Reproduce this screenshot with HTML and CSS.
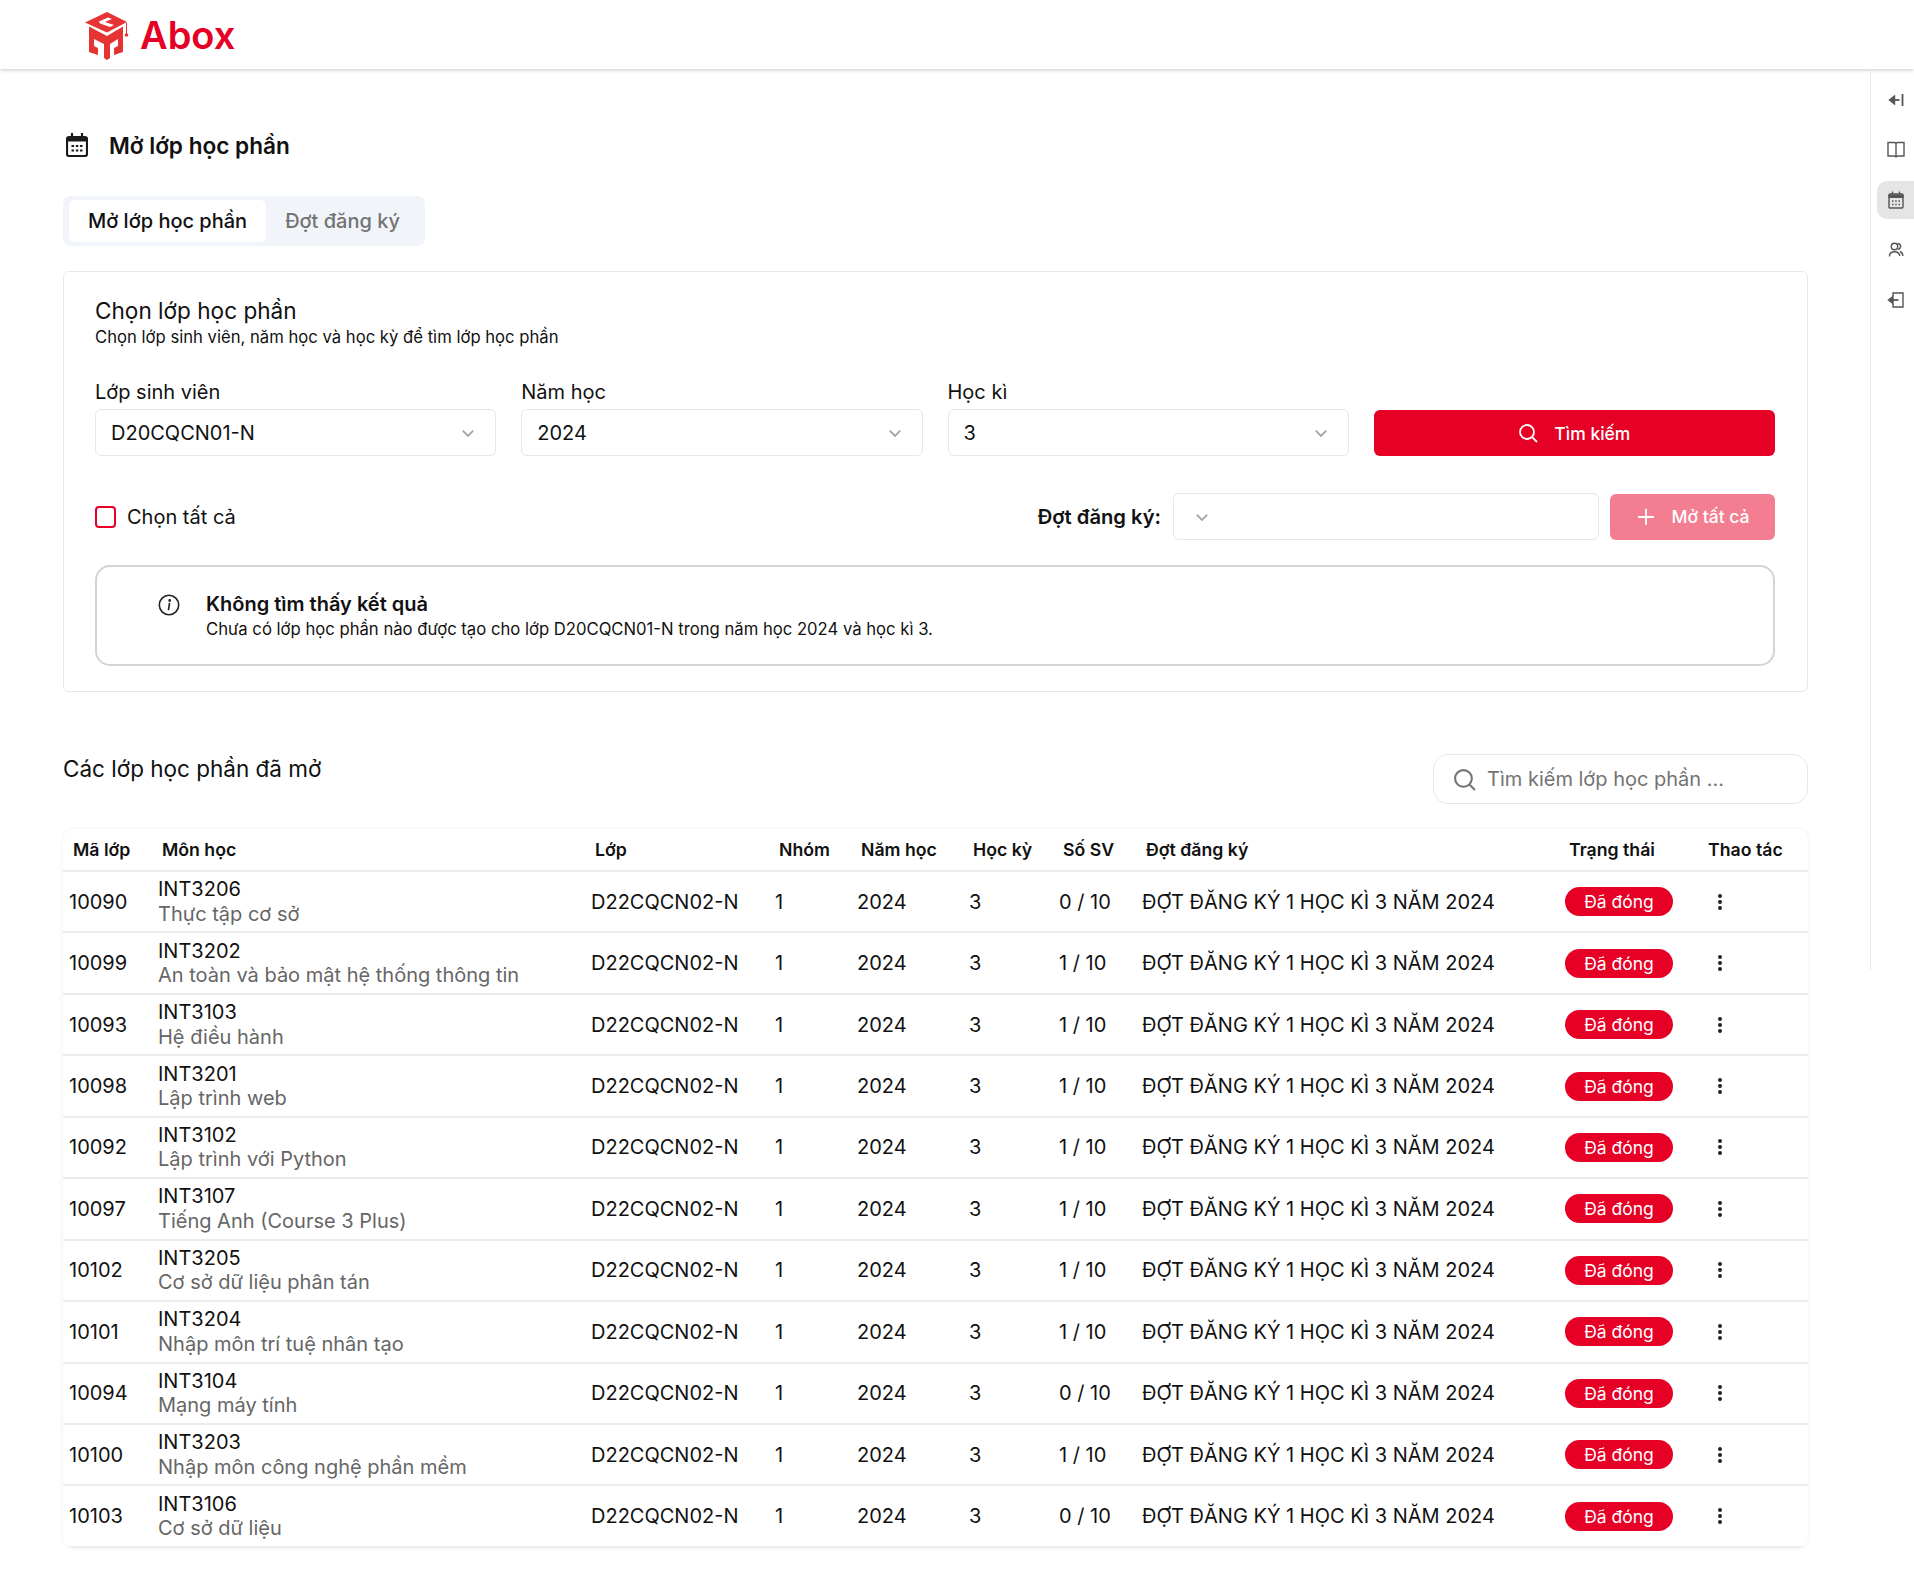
FILE: index.html
```html
<!DOCTYPE html>
<html lang="vi">

<head>
    <meta charset="UTF-8">
    <meta name="viewport" content="width=device-width, initial-scale=1.0">
    <title>Mở lớp học phần</title>
    <link rel="stylesheet" href="styles.css">
</head>

<body>
    <!--en-tete-->
    <header class="topbar">
        <svg class="logo" viewBox="0 0 54 54" fill="#e63333">
            <path d="M5 14.500 27 4 47 14 27 24.500Z" />
            <path d="M19 13.500 28 9.500 32 11 25 14 34 17 30 19 20 15.500Z" fill="#fff" />
            <path d="M46 15h1v11h-1z" />
            <circle cx="46.500" cy="27" r="1.800" />
            <path d="M9 18.500 27 28 43 18.500V44L34 47V40L38 38V31L30 36V50L27 52 24 50V36L14 31V38L18 40V47L9 44Z" />
        </svg>
        <span class="brand">Abox</span>
    </header>

    <div class="layout">
        <main class="main">
            <div class="page-title">
                <svg class="title-icon" viewBox="0 0 22 24" fill="none" stroke="#1a1a1a" stroke-width="2.200">
                    <rect x="1" y="4" width="20" height="19" rx="2" />
                    <path d="M1 5H21V8H1Z" fill="#1a1a1a" stroke-width="1" />
                    <path d="M6 0V4M16 0V4" />
                    <path d="M5.500 13h2.500M9.800 13h2.500M14 13h2.500M5.500 17.500h2.500M9.800 17.500h2.500M14 17.500h2.500" stroke-width="2" />
                </svg>
                <h1>Mở lớp học phần</h1>
            </div>

            <div class="tabs">
                <button class="tab tab-active">Mở lớp học phần</button>
                <button class="tab">Đợt đăng ký</button>
            </div>

            <section class="card">
                <h2>Chọn lớp học phần</h2>
                <p class="card-sub">Chọn lớp sinh viên, năm học và học kỳ để tìm lớp học phần</p>

                <div class="filters">
                    <div class="field">
                        <label>Lớp sinh viên</label>
                        <div class="select"><span>D20CQCN01-N</span>
                            <svg class="chevron" viewBox="0 0 12 12"><path d="M1.500 4 6 8.500 10.500 4" /></svg>
                        </div>
                    </div>
                    <div class="field">
                        <label>Năm học</label>
                        <div class="select"><span>2024</span>
                            <svg class="chevron" viewBox="0 0 12 12"><path d="M1.500 4 6 8.500 10.500 4" /></svg>
                        </div>
                    </div>
                    <div class="field">
                        <label>Học kì</label>
                        <div class="select"><span>3</span>
                            <svg class="chevron" viewBox="0 0 12 12"><path d="M1.500 4 6 8.500 10.500 4" /></svg>
                        </div>
                    </div>
                    <button class="btn btn-search">
                        <svg class="btn-icon" viewBox="0 0 20 20" fill="none" stroke="#fff" stroke-width="1.800">
                            <circle cx="9" cy="9" r="7" /><path d="M14 14 19 19" />
                        </svg>
                        Tìm kiếm
                    </button>
                </div>

                <div class="select-all-row">
                    <label class="check"><span class="checkbox"></span>Chọn tất cả</label>
                    <div class="batch">
                        <span class="batch-label">Đợt đăng ký:</span>
                        <div class="select select-batch">
                            <svg class="chevron" viewBox="0 0 12 12"><path d="M1.500 4 6 8.500 10.500 4" /></svg>
                        </div>
                        <button class="btn btn-open">
                            <svg class="btn-icon" viewBox="0 0 20 20" fill="none" stroke="#fff" stroke-width="1.800">
                                <path d="M10 2V18M2 10H18" />
                            </svg>
                            Mở tất cả
                        </button>
                    </div>
                </div>

                <div class="alert">
                    <svg class="alert-icon" viewBox="0 0 22 22" fill="none" stroke="#222" stroke-width="1.600">
                        <circle cx="11" cy="11" r="9.700" />
                        <path d="M11.500 9.500 10.500 15.500" stroke-linecap="round" />
                        <circle cx="11.700" cy="6.500" r=".6" fill="#222" />
                    </svg>
                    <div>
                        <div class="alert-title">Không tìm thấy kết quả</div>
                        <div class="alert-text">Chưa có lớp học phần nào được tạo cho lớp D20CQCN01-N trong năm học 2024 và học kì 3.</div>
                    </div>
                </div>
            </section>

            <div class="list-head">
                <h2>Các lớp học phần đã mở</h2>
                <div class="search">
                    <svg class="search-icon" viewBox="0 0 22 22" fill="none" stroke="#737373" stroke-width="2">
                        <circle cx="10" cy="10" r="8" /><path d="M16 16 21 21" />
                    </svg>
                    <span>Tìm kiếm lớp học phần ...</span>
                </div>
            </div>

            <div class="table-wrap">
                <table>
                    <colgroup>
                        <col class="c-id"><col class="c-subject"><col class="c-class"><col class="c-group"><col class="c-year">
                        <col class="c-term"><col class="c-count"><col class="c-batch"><col class="c-status"><col class="c-action">
                    </colgroup>
                    <thead>
                        <tr>
                            <th>Mã lớp</th><th>Môn học</th><th>Lớp</th><th>Nhóm</th><th>Năm học</th>
                            <th>Học kỳ</th><th>Số SV</th><th>Đợt đăng ký</th><th>Trạng thái</th><th>Thao tác</th>
                        </tr>
                    </thead>
                    <tbody>
                        <tr>
                            <td>10090</td>
                            <td><div class="code">INT3206</div><div class="subject">Thực tập cơ sở</div></td>
                            <td>D22CQCN02-N</td><td>1</td><td>2024</td><td>3</td><td>0 / 10</td>
                            <td>ĐỢT ĐĂNG KÝ 1 HỌC KÌ 3 NĂM 2024</td>
                            <td><span class="badge">Đã đóng</span></td>
                            <td><span class="dots"><i></i><i></i><i></i></span></td>
                        </tr>
                        <tr>
                            <td>10099</td>
                            <td><div class="code">INT3202</div><div class="subject">An toàn và bảo mật hệ thống thông tin</div></td>
                            <td>D22CQCN02-N</td><td>1</td><td>2024</td><td>3</td><td>1 / 10</td>
                            <td>ĐỢT ĐĂNG KÝ 1 HỌC KÌ 3 NĂM 2024</td>
                            <td><span class="badge">Đã đóng</span></td>
                            <td><span class="dots"><i></i><i></i><i></i></span></td>
                        </tr>
                        <tr>
                            <td>10093</td>
                            <td><div class="code">INT3103</div><div class="subject">Hệ điều hành</div></td>
                            <td>D22CQCN02-N</td><td>1</td><td>2024</td><td>3</td><td>1 / 10</td>
                            <td>ĐỢT ĐĂNG KÝ 1 HỌC KÌ 3 NĂM 2024</td>
                            <td><span class="badge">Đã đóng</span></td>
                            <td><span class="dots"><i></i><i></i><i></i></span></td>
                        </tr>
                        <tr>
                            <td>10098</td>
                            <td><div class="code">INT3201</div><div class="subject">Lập trình web</div></td>
                            <td>D22CQCN02-N</td><td>1</td><td>2024</td><td>3</td><td>1 / 10</td>
                            <td>ĐỢT ĐĂNG KÝ 1 HỌC KÌ 3 NĂM 2024</td>
                            <td><span class="badge">Đã đóng</span></td>
                            <td><span class="dots"><i></i><i></i><i></i></span></td>
                        </tr>
                        <tr>
                            <td>10092</td>
                            <td><div class="code">INT3102</div><div class="subject">Lập trình với Python</div></td>
                            <td>D22CQCN02-N</td><td>1</td><td>2024</td><td>3</td><td>1 / 10</td>
                            <td>ĐỢT ĐĂNG KÝ 1 HỌC KÌ 3 NĂM 2024</td>
                            <td><span class="badge">Đã đóng</span></td>
                            <td><span class="dots"><i></i><i></i><i></i></span></td>
                        </tr>
                        <tr>
                            <td>10097</td>
                            <td><div class="code">INT3107</div><div class="subject">Tiếng Anh (Course 3 Plus)</div></td>
                            <td>D22CQCN02-N</td><td>1</td><td>2024</td><td>3</td><td>1 / 10</td>
                            <td>ĐỢT ĐĂNG KÝ 1 HỌC KÌ 3 NĂM 2024</td>
                            <td><span class="badge">Đã đóng</span></td>
                            <td><span class="dots"><i></i><i></i><i></i></span></td>
                        </tr>
                        <tr>
                            <td>10102</td>
                            <td><div class="code">INT3205</div><div class="subject">Cơ sở dữ liệu phân tán</div></td>
                            <td>D22CQCN02-N</td><td>1</td><td>2024</td><td>3</td><td>1 / 10</td>
                            <td>ĐỢT ĐĂNG KÝ 1 HỌC KÌ 3 NĂM 2024</td>
                            <td><span class="badge">Đã đóng</span></td>
                            <td><span class="dots"><i></i><i></i><i></i></span></td>
                        </tr>
                        <tr>
                            <td>10101</td>
                            <td><div class="code">INT3204</div><div class="subject">Nhập môn trí tuệ nhân tạo</div></td>
                            <td>D22CQCN02-N</td><td>1</td><td>2024</td><td>3</td><td>1 / 10</td>
                            <td>ĐỢT ĐĂNG KÝ 1 HỌC KÌ 3 NĂM 2024</td>
                            <td><span class="badge">Đã đóng</span></td>
                            <td><span class="dots"><i></i><i></i><i></i></span></td>
                        </tr>
                        <tr>
                            <td>10094</td>
                            <td><div class="code">INT3104</div><div class="subject">Mạng máy tính</div></td>
                            <td>D22CQCN02-N</td><td>1</td><td>2024</td><td>3</td><td>0 / 10</td>
                            <td>ĐỢT ĐĂNG KÝ 1 HỌC KÌ 3 NĂM 2024</td>
                            <td><span class="badge">Đã đóng</span></td>
                            <td><span class="dots"><i></i><i></i><i></i></span></td>
                        </tr>
                        <tr>
                            <td>10100</td>
                            <td><div class="code">INT3203</div><div class="subject">Nhập môn công nghệ phần mềm</div></td>
                            <td>D22CQCN02-N</td><td>1</td><td>2024</td><td>3</td><td>1 / 10</td>
                            <td>ĐỢT ĐĂNG KÝ 1 HỌC KÌ 3 NĂM 2024</td>
                            <td><span class="badge">Đã đóng</span></td>
                            <td><span class="dots"><i></i><i></i><i></i></span></td>
                        </tr>
                        <tr>
                            <td>10103</td>
                            <td><div class="code">INT3106</div><div class="subject">Cơ sở dữ liệu</div></td>
                            <td>D22CQCN02-N</td><td>1</td><td>2024</td><td>3</td><td>0 / 10</td>
                            <td>ĐỢT ĐĂNG KÝ 1 HỌC KÌ 3 NĂM 2024</td>
                            <td><span class="badge">Đã đóng</span></td>
                            <td><span class="dots"><i></i><i></i><i></i></span></td>
                        </tr>
                    </tbody>
                </table>
            </div>
        </main>

        <!--barre laterale-->
        <aside class="side">
            <div class="side-item">
                <svg viewBox="0 0 18 18"><path d="M15.500 3V15" stroke-width="1.800" /><path d="M12.500 9H5" stroke-width="1.800" /><path d="M7.500 5 2.500 9 7.500 13Z" fill="#555" /></svg>
            </div>
            <div class="side-item">
                <svg viewBox="0 0 18 18"><path d="M1 1.500H7.500Q9 1.500 9 3V16.500Q9 15 7.500 15H1ZM17 1.500H10.500Q9 1.500 9 3V16.500Q9 15 10.500 15H17Z" /></svg>
            </div>
            <div class="side-item side-active">
                <svg viewBox="0 0 18 18"><rect x="2" y="3" width="14" height="14" rx="1" /><path d="M2 4H16V6.500H2Z" fill="#555" stroke-width="1" /><path d="M5.500 .5V3.500M12.500 .5V3.500" /><path d="M5 10h1.500M8.200 10h1.500M11.500 10h1.500M5 13.500h1.500M8.200 13.500h1.500M11.500 13.500h1.500" /></svg>
            </div>
            <div class="side-item">
                <svg viewBox="0 0 18 18"><circle cx="7.500" cy="5.500" r="3.200" /><path d="M2.500 15.500C2.500 12.500 4.500 10.800 7.500 10.800S12.500 12.500 12.800 15" /><path d="M10.500 2.500C12.500 2.500 13.600 3.900 13.600 5.500S12.500 8 11 8.500" /><path d="M13 10.500C14.700 11.200 15.800 12.800 15.800 15" /></svg>
            </div>
            <div class="side-item">
                <svg viewBox="0 0 18 18"><path d="M6 5V2H16V16H6V13" /><path d="M11.500 9H4" stroke-width="1.800" /><path d="M6 5.500 1.500 9 6 12.500Z" fill="#555" /></svg>
            </div>
        </aside>
    </div>
</body>

</html>
```

FILE: styles.css
```css
* {
    box-sizing: border-box;
}

body {
    margin: 0;
    font-family: Inter, "Noto Sans", sans-serif;
    font-size: 20px;
    color: #111;
    background-color: white;
}

/* en-tete */
.topbar {
    height: 69px;
    padding-left: 80px;
    display: flex;
    align-items: center;
    gap: 6px;
    background-color: white;
    box-shadow: 0 1px 4px rgba(0, 0, 0, 0.22);
}

.logo {
    width: 54px;
    height: 54px;
}

.brand {
    font-size: 38px;
    font-weight: 600;
    color: #e60026;
    line-height: 1;
}

.layout {
    display: flex;
    align-items: flex-start;
}

.main {
    flex: 1;
    min-width: 0;
    padding: 0 62px 38px 63px;
}

/* barre laterale */
.side {
    width: 44px;
    height: 901px;
    padding-top: 12px;
    padding-left: 6px;
    border-left: 1px solid #e8e8e8;
    display: flex;
    flex-direction: column;
    gap: 12px;
}

.side-item {
    height: 38px;
    display: flex;
    align-items: center;
    justify-content: center;
    border-radius: 10px 0 0 10px;
}

.side-item svg {
    width: 18px;
    height: 18px;
    fill: none;
    stroke: #555;
    stroke-width: 1.400;
}

.side-active {
    background-color: #e5e5e5;
}

/* titre */
.page-title {
    height: 64px;
    margin-top: 44px;
    display: flex;
    align-items: center;
}

.title-icon {
    width: 22px;
    height: 24px;
    margin-left: 3px;
    margin-right: 21px;
}

.page-title h1 {
    margin: 0;
    font-size: 22.600px;
    font-weight: 600;
}

/* onglets */
.tabs {
    width: 362px;
    height: 50px;
    margin-top: 19px;
    padding: 4px 6px;
    display: flex;
    background-color: #f1f5f9;
    border-radius: 7px;
}

.tab {
    padding: 0 19px;
    border: none;
    background: none;
    font-family: inherit;
    font-size: 20px;
    font-weight: 500;
    color: #737373;
    border-radius: 6px;
}

.tab-active {
    color: #111;
    background-color: white;
}

/* carte */
.card {
    height: 421px;
    margin-top: 25px;
    padding: 25px 32px 0 31px;
    border: 1px solid #e5e7eb;
    border-radius: 6px;
}

.card h2 {
    margin: 0;
    font-size: 22.600px;
    font-weight: 400;
}

.card-sub {
    margin: 1px 0 0;
    font-size: 16.670px;
    line-height: 24px;
}

.filters {
    margin-top: 30px;
    display: grid;
    grid-template-columns: repeat(4, 1fr);
    gap: 25px;
    align-items: end;
}

.field label {
    display: block;
    margin-bottom: 4px;
    line-height: 26px;
}

.select {
    height: 47px;
    padding: 0 20px 0 15px;
    display: flex;
    align-items: center;
    justify-content: space-between;
    border: 1px solid #e5e7eb;
    border-radius: 6px;
}

.chevron {
    width: 14px;
    height: 14px;
    fill: none;
    stroke: #a3a3a3;
    stroke-width: 1.500;
}

.btn {
    height: 46px;
    border: none;
    border-radius: 6px;
    display: flex;
    align-items: center;
    justify-content: center;
    gap: 16px;
    font-family: inherit;
    font-size: 17.500px;
    font-weight: 500;
    color: white;
}

.btn-search {
    background-color: #e60026;
}

.btn-open {
    width: 165px;
    background-color: #f37e91;
}

.btn-icon {
    width: 20px;
    height: 20px;
}

.select-all-row {
    margin-top: 37px;
    display: flex;
    align-items: center;
    justify-content: space-between;
}

.check {
    display: flex;
    align-items: center;
    gap: 11px;
}

.checkbox {
    width: 21px;
    height: 22px;
    border: 2px solid #e60026;
    border-radius: 4px;
}

.batch {
    display: flex;
    align-items: center;
}

.batch-label {
    font-size: 20.200px;
    font-weight: 600;
    margin-right: 12px;
}

.select-batch {
    width: 426px;
    margin-right: 11px;
    padding: 0 21px;
}

.alert {
    height: 101px;
    margin-top: 25px;
    padding: 24px 0 0 61px;
    display: flex;
    gap: 26px;
    border: 2px solid #d4d4d4;
    border-radius: 15px;
}

.alert-icon {
    width: 22px;
    height: 22px;
    margin-top: 3px;
    flex-shrink: 0;
}

.alert-title {
    font-weight: 600;
    line-height: 26px;
}

.alert-text {
    font-size: 16.670px;
    line-height: 24px;
}

/* liste */
.list-head {
    margin-top: 62px;
    display: flex;
    justify-content: space-between;
    align-items: flex-start;
}

.list-head h2 {
    margin: 1px 0 0;
    font-size: 22.500px;
    font-weight: 400;
}

.search {
    width: 375px;
    height: 50px;
    padding-left: 19px;
    display: flex;
    align-items: center;
    gap: 11px;
    color: #737373;
    border: 1px solid #e5e7eb;
    border-radius: 15px;
}

.search-icon {
    width: 23px;
    height: 23px;
}

.table-wrap {
    margin-top: 25px;
    border-radius: 10px;
    box-shadow: 0 0 4px rgba(0, 0, 0, 0.08);
    overflow: hidden;
}

table {
    width: 100%;
    table-layout: fixed;
    border-collapse: collapse;
}

.c-id { width: 89px; }
.c-subject { width: 433px; }
.c-class { width: 184px; }
.c-group { width: 82px; }
.c-year { width: 112px; }
.c-term { width: 90px; }
.c-count { width: 83px; }
.c-batch { width: 423px; }
.c-status { width: 139px; }

th {
    height: 42px;
    padding: 0 0 0 10px;
    text-align: left;
    font-size: 17.700px;
    font-weight: 600;
    border-bottom: 2px solid #ececec;
}

td {
    height: 61.450px;
    padding: 0 0 0 6px;
    border-bottom: 2px solid #ececec;
    white-space: nowrap;
    font-size: 20px;
}

.code {
    line-height: 24.500px;
}

.subject {
    line-height: 24.500px;
    color: #666;
}

.badge {
    display: inline-block;
    width: 108px;
    height: 29px;
    line-height: 29px;
    text-align: center;
    font-size: 17.500px;
    color: white;
    background-color: #e60026;
    border-radius: 15px;
}

.dots {
    display: flex;
    flex-direction: column;
    gap: 2px;
    margin-left: 14px;
}

.dots i {
    width: 4px;
    height: 4px;
    background-color: #222;
    border-radius: 50%;
}
```
